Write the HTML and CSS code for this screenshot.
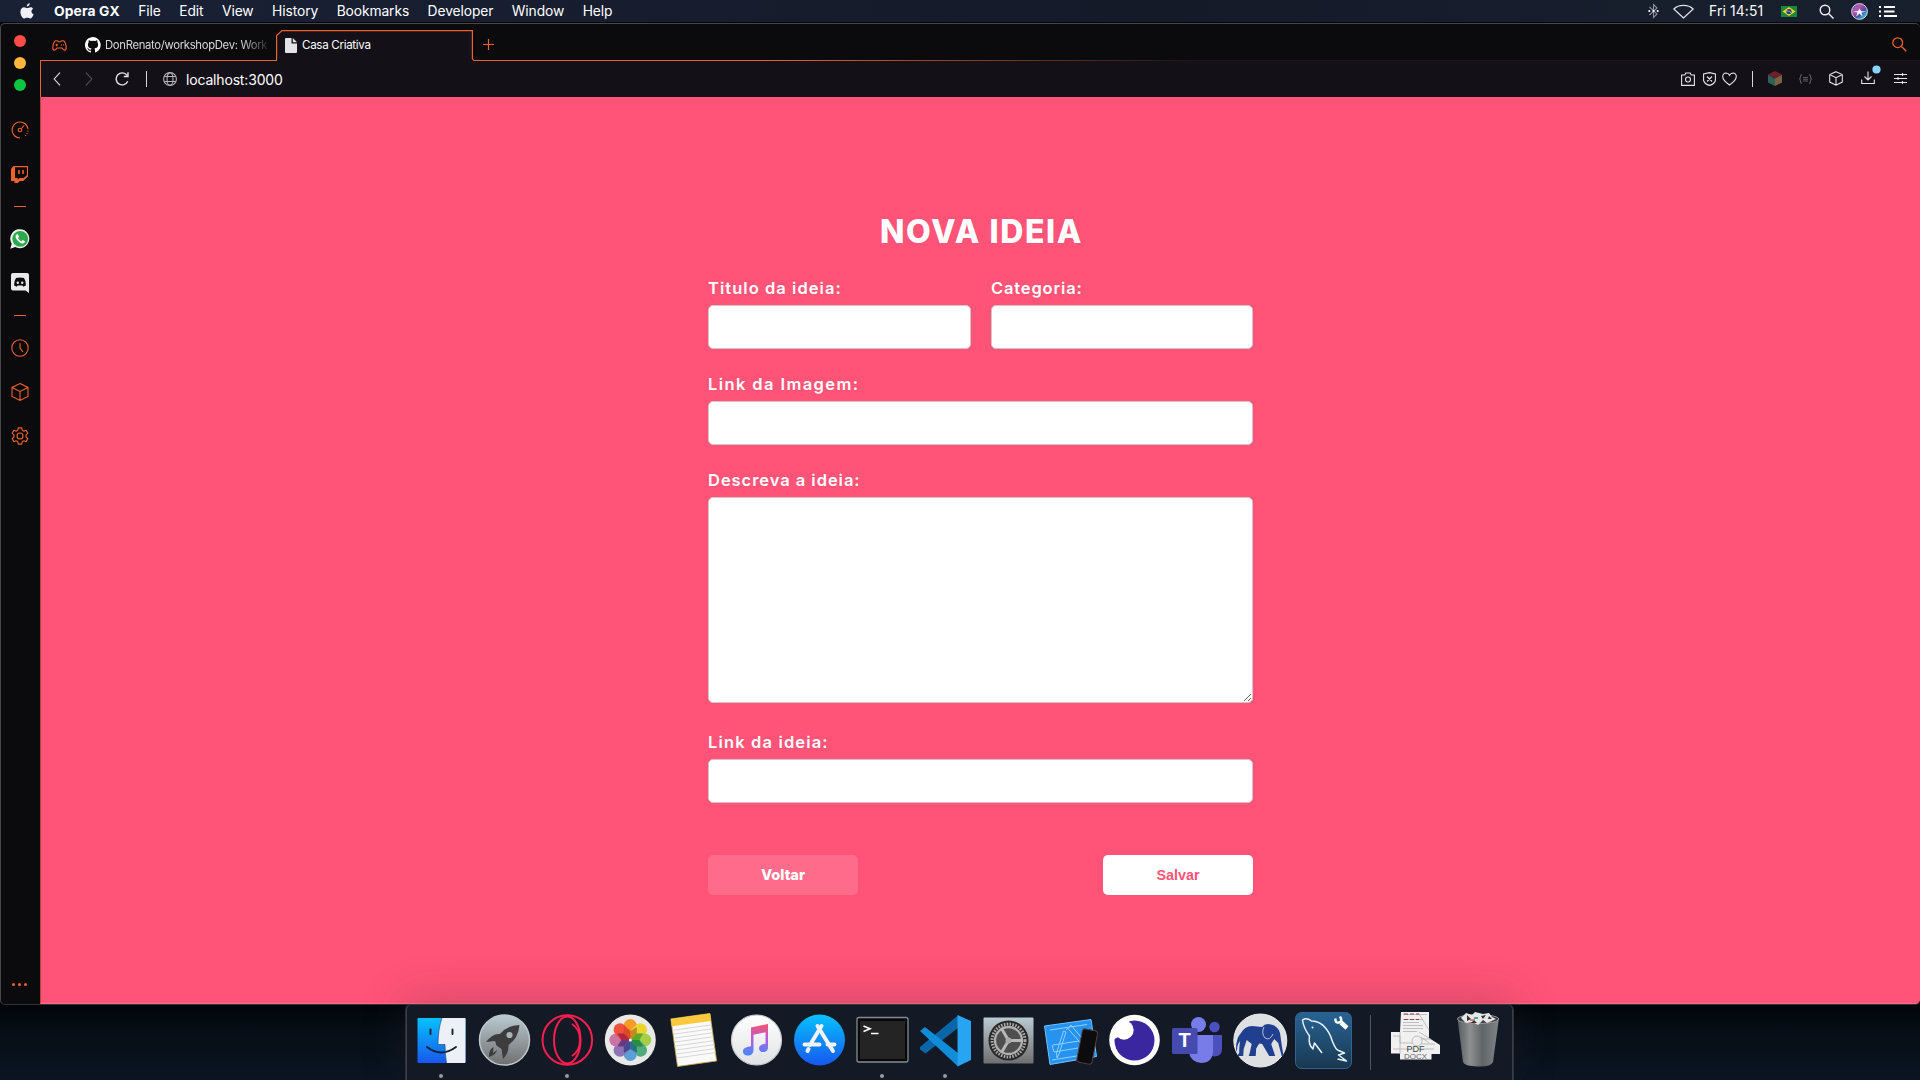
FILE: index.html
```html
<!DOCTYPE html>
<html lang="pt-BR">
<head>
<meta charset="utf-8">
<title>Casa Criativa</title>
<link rel="stylesheet" href="styles.css">
</head>
<body>
<header class="menubar">
  <svg class="apple" width="14" height="17" viewBox="0 0 14 17"><path fill="#eef0f5" d="M9.8 0c.1 1.900-1.300 3.500-3 3.600C6.600 1.900 8.200.2 9.800 0zM13 5.700c-2.300 1.500-1.900 4.500.6 5.500-.8 2.300-2.100 4.300-3.400 4.300-1.100 0-1.500-.7-2.900-.7s-1.800.7-2.900.7C2.500 15.500.4 11.900.4 8.900c0-3 1.900-4.600 3.700-4.600 1.300 0 2.200.8 3.200.8.900 0 2-.9 3.500-.9.9 0 1.700.5 2.200 1.500z"/></svg>
  <nav class="menus">
    <span class="app-name">Opera GX</span><span>File</span><span>Edit</span><span>View</span><span>History</span><span>Bookmarks</span><span>Developer</span><span>Window</span><span>Help</span>
  </nav>
  <div class="status">
    <svg class="bt" width="11" height="16" viewBox="0 0 11 16" fill="none"><path stroke="#8d929c" stroke-width="1.100" d="M1.500 4 9 11l-3.500 3.500v-13L9 5l-7.500 7"/><g fill="#fff"><circle cx="1.300" cy="8" r="1.100"/><circle cx="5.500" cy="8" r="1.100"/><circle cx="9.700" cy="8" r="1.100"/></g></svg>
    <svg class="wifi" width="21" height="15" viewBox="0 0 21 15"><path d="M.8 5C6 .2 15 .2 20.200 5L10.500 14z" fill="none" stroke="#dfe2e8" stroke-width="1.200" stroke-linejoin="round"/></svg>
    <span class="clock">Fri 14:51</span>
    <svg class="flag" width="16" height="11" viewBox="0 0 16 11"><path fill="#16893a" d="M0 0h16v11H0z"/><path fill="#f4d22e" d="m8 1 6.500 4.500L8 10 1.500 5.500z"/><circle cx="8" cy="5.500" r="2.600" fill="#26397c"/><path d="M5.600 4.800q3 0 4.600 2" stroke="#cdd" stroke-width=".7" fill="none"/></svg>
    <svg class="find" width="15" height="15" viewBox="0 0 15 15" fill="none" stroke="#eef0f5" stroke-width="1.400"><circle cx="6" cy="6" r="4.800"/><path d="m9.500 9.500 5 5"/></svg>
    <svg class="siri" width="17" height="17" viewBox="0 0 17 17"><defs><linearGradient id="si" x1="0" y1="0" x2="1" y2="1"><stop stop-color="#3a6fd0"/><stop offset=".35" stop-color="#c052a8"/><stop offset=".6" stop-color="#4a4aa8"/><stop offset=".85" stop-color="#35c8d8"/></linearGradient></defs><circle cx="8.500" cy="8.500" r="7.900" fill="url(#si)" stroke="#dfe3ec" stroke-width=".9"/><path fill="#f3f7ff" d="m8.500 5.500 1.500 2.500 5 .8-4.500.8 1 4-3-3-3.500 3.200 1.500-4.200-4.500-.8L7 8z"/></svg>
    <svg width="18" height="11" viewBox="0 0 18 11" stroke="#fff" stroke-width="1.800"><path d="M0 1h2M5 1h11M0 5.500h2M5 5.500h10.500M0 10h2M5 10h13"/></svg>
  </div>
</header>

<div class="window">
  <aside class="sidebar">
    <div class="lights"><i class="red"></i><i class="yellow"></i><i class="green"></i></div>
    <div class="tools">
      <svg width="18" height="18" viewBox="0 0 18 18"><path d="M9 17A8 8 0 1 1 17 8"/><circle cx="9" cy="9" r="1.800"/><path d="m10.500 7.500 2.500-3"/><path stroke-dasharray="1 1.500" d="M17 9.500Q16.500 13 14 15"/></svg>
      <svg class="g27" width="17" height="17" viewBox="0 0 17 17"><path fill="#f0622d" d="M0 4 3 0v12.500h3V15l2.500-2.500h4.300L16.500 9V0h.5v9.500L12 14.500H8.500L6 17H4v-2.500H0z"/><path fill="#0b0b0d" d="M3.500.6h13v8.900l-3.500 3H9L6.200 15v-2.500H3.500z"/><path stroke-width="1.600" d="M8 4v4m4-4v4"/></svg>
      <i class="dash g23"></i>
      <svg class="brand g22" width="20" height="20" viewBox="0 0 20 20"><path fill="#eee" d="m.3 19.700 1.400-5A9.500 9.500 0 1 1 5.200 18z"/><circle cx="10.200" cy="9.800" r="7.900" fill="#2ba94c"/><path fill="#fff" d="M6.800 5.200C5 6.300 5.300 8.300 6.800 10.500c1.800 2.600 4.200 4.300 6.300 3.900 1.400-.3 2-1.300 1.800-2.200l-2.200-1.100-1.200 1.200c-1.600-.6-2.800-1.900-3.500-3.300l1-1.200-1-2.500z"/></svg>
      <svg class="brand g24" width="18" height="20" viewBox="0 0 18 20"><path fill="#e9e9ea" d="M2 0h14q2 0 2 2v18l-3.500-2.500H2q-2 0-2-2V2q0-2 2-2z"/><path fill="#0b0b0d" d="M5 5q4-1.200 8 0 2 3 2 7.300l-2.600 1.400-1-1.300H6.600l-1 1.300L3 12.300Q3 8 5 5z"/><circle cx="6.800" cy="9.800" r="1.200" fill="#e9e9ea"/><circle cx="11.200" cy="9.800" r="1.200" fill="#e9e9ea"/></svg>
      <i class="dash g22"></i>
      <svg class="g23" width="18" height="18" viewBox="0 0 18 18"><circle cx="9" cy="9" r="8.200"/><path d="M9 4.200V9l3 4"/></svg>
      <svg class="g26" width="18" height="18" viewBox="0 0 18 18"><path d="m9 .6 8 3.800v9L9 17.400l-8-4v-9zM1 4.400l8 4 8-4M9 8.400v9"/></svg>
      <svg class="g26" width="18" height="18" viewBox="0 0 18 18"><path d="M7.300.9h3.400l.5 2.300 1.600.9 2.300-.8 1.700 2.900L15 7.900v2l1.800 1.700-1.700 2.900-2.300-.7-1.600.9-.5 2.400H7.300l-.5-2.400-1.600-.9-2.300.7-1.700-2.900L3 9.900v-2L1.200 6.200l1.700-2.900 2.300.8 1.600-.9z"/><circle cx="9" cy="9" r="3"/></svg>
    </div>
    <div class="more"><i></i><i></i><i></i></div>
  </aside>

  <div class="main">
    <div class="tabstrip">
      <div class="tab-left">
        <svg width="15" height="11" viewBox="0 0 15 11" fill="none" stroke="#f0622d" stroke-width="1.100"><path d="M3.500.7h1.700l1 1h2.600l1-1h1.700q2 1 2.700 6.500.2 2.800-1.500 3Q11.200 10 10 8H5Q3.800 10 2.300 10.200.6 10 .8 7.200 1.500 1.700 3.500.7zM3.500 5H6M4.750 3.750v2.500M9 5h1m1 0h1"/></svg>
        <svg class="gh" width="16" height="16" viewBox="0 0 16 16"><path fill="#fff" d="M8 0C3.580 0 0 3.580 0 8c0 3.540 2.290 6.530 5.470 7.590.4.070.55-.17.55-.38v-1.490c-2.230.48-2.700-1.070-2.700-1.070-.36-.92-.89-1.170-.89-1.170-.73-.5.050-.49.050-.49.800.060 1.230.83 1.230.83.720 1.220 1.870.87 2.330.66.070-.52.280-.87.510-1.070-1.780-.2-3.640-.89-3.640-3.950 0-.87.310-1.590.82-2.150-.08-.2-.36-1.020.08-2.120 0 0 .67-.21 2.200.82a7.600 7.600 0 0 1 4 0c1.530-1.040 2.200-.82 2.200-.82.440 1.100.16 1.920.08 2.120.51.560.82 1.270.82 2.150 0 3.070-1.870 3.750-3.650 3.950.29.250.54.730.54 1.480v2.200c0 .21.150.46.550.38A8 8 0 0 0 8 0z"/></svg>
        <span class="tab-title faded">DonRenato/workshopDev: Work</span>
      </div>
      <div class="tab-active">
        <svg class="tab-shape" width="198" height="32" viewBox="0 0 198 32"><path fill="#131117" stroke="#f0622d" stroke-width="1.200" d="M0 30.500h.6V5.500L6 .6h190.400V29l2 1.500"/><path fill="#131117" d="M1.200 29.500h195v2.500h-195z"/></svg>
        <svg class="doc" width="12" height="15" viewBox="0 0 12 15"><path fill="#e2e4e8" d="M1 0h5.500v5.500H12V14q0 1-1 1H1q-1 0-1-1V1q0-1 1-1zM7.800 0 12 4.300H7.800z"/></svg>
        <span class="tab-title">Casa Criativa</span>
      </div>
      <div class="tab-rest">
        <svg width="11" height="11" viewBox="0 0 11 11" stroke="#f0622d" stroke-width="1.200"><path d="M5.500 0v11M0 5.500h11"/></svg>
        <svg width="15" height="15" viewBox="0 0 15 15" fill="none" stroke="#f0622d" stroke-width="1.300"><circle cx="5.700" cy="5.700" r="4.900"/><path d="m9.300 9.300 5 5"/></svg>
      </div>
    </div>
    <div class="toolbar">
      <svg class="back" width="8" height="14" viewBox="0 0 8 14"><path d="M7 .7 1.200 7 7 13.300"/></svg>
      <svg class="fwd" width="8" height="14" viewBox="0 0 8 14"><path stroke="#55545a" d="M1 .7 6.800 7 1 13.300"/></svg>
      <svg class="reload" width="14" height="14" viewBox="0 0 14 14"><path stroke-width="1.400" d="M12.700 9.200A6 6 0 1 1 12 3.300M13 .3v4.200H8.800"/></svg>
      <i class="sep"></i>
      <svg class="globe" width="14" height="14" viewBox="0 0 14 14"><g stroke="#b4b4b9"><circle cx="7" cy="7" r="6.400"/><ellipse cx="7" cy="7" rx="3" ry="6.400"/><path d="M1.500 4.500h11M1.500 9.500h11"/></g></svg>
      <span class="url">localhost:3000</span>
      <div class="actions">
        <svg class="a1" width="14" height="14" viewBox="0 0 14 14"><path d="M.6 3h3.200l1-2h4.400l1 2h3.200v10.400H.6z"/><circle cx="7" cy="7.500" r="2.500"/></svg>
        <svg class="a2" width="13" height="14" viewBox="0 0 13 14"><path d="M6.500.6 12.400 2v6.500q-1 3.500-5.900 4.900Q1.600 12 .6 8.500V2zM4 4.500l5 5m0-5-5 5"/></svg>
        <svg class="a3" width="15" height="14" viewBox="0 0 15 14"><path d="M7.500 13Q.7 8.500.7 4.600.8 1.200 4 1q2.500.1 3.500 2.300Q8.500 1.100 11 1q3.200.2 3.300 3.600 0 3.900-6.800 8.400z"/></svg>
        <i class="sep"></i>
        <svg class="brand a4" width="14" height="15" viewBox="0 0 14 15"><path fill="#701f2d" d="m7 0 7 3.500L7 7.300 0 3.500z"/><path fill="#2b6257" d="M0 3.700 7 7.500V15l-7-3.500z"/><path fill="#7a6240" d="M14 3.700 7 7.500V15l7-3.500z"/></svg>
        <svg class="a5" width="13" height="10" viewBox="0 0 13 10"><path stroke="#5c5c62" d="M3 .6q-1.500 0-1.500 2T.3 5q1.200.2 1.200 2.300T3 9.400M10 .6q1.500 0 1.500 2T12.700 5q-1.200.2-1.200 2.300T10 9.400M4 3.500h5M4 5.200h5M4 7h5"/></svg>
        <svg class="a6" width="14" height="15" viewBox="0 0 14 15"><path d="m7 .7 6.300 2.900v7.500L7 14.200.7 11.100V3.600zM.7 3.600 7 6.700l6.300-3.100M7 6.700v7.500"/></svg>
        <svg class="a7" width="20" height="20" viewBox="0 0 20 20"><path d="M.7 14.500v4h12.600v-4M7 6.500V15M3.500 11.500 7 15l3.500-3.500"/><circle cx="15.500" cy="4.500" r="4.100" fill="#86d4ff" stroke="none"/></svg>
        <svg class="a8" width="13" height="11" viewBox="0 0 13 11"><path d="M0 1.500h13M0 5.500h13M0 9.500h13M8.500 0v3M4 4v3M8.500 8v3"/></svg>
      </div>
    </div>
    <main class="page">
      <form class="idea-form">
        <h1>NOVA IDEIA</h1>
        <div class="pair">
          <div class="field"><label class="titulo" for="t">Titulo da ideia:</label><input id="t"></div>
          <div class="field"><label class="categoria" for="c">Categoria:</label><input id="c"></div>
        </div>
        <div class="field"><label class="imagem" for="i">Link da Imagem:</label><input id="i"></div>
        <div class="field"><label class="descricao" for="d">Descreva a ideia:</label><textarea id="d"></textarea></div>
        <div class="field"><label class="link" for="l">Link da ideia:</label><input id="l"></div>
        <div class="buttons"><button type="button" class="ghost">Voltar</button><button type="button" class="solid">Salvar</button></div>
      </form>
    </main>
  </div>
</div>

<footer class="dock">
  <svg width="1107" height="75" viewBox="406 1005 1107 75">
    <defs>
      <linearGradient id="blue" x2="0" y2="1"><stop stop-color="#07c1fc"/><stop offset="1" stop-color="#1758f0"/></linearGradient>
      <linearGradient id="silver" x2="0" y2="1"><stop stop-color="#b9cbd2"/><stop offset="1" stop-color="#706f70"/></linearGradient>
      <linearGradient id="white" x2="0" y2="1"><stop stop-color="#fff"/><stop offset="1" stop-color="#e1e2e6"/></linearGradient>
      <linearGradient id="note" x2="0" y2="1"><stop stop-color="#f5546b"/><stop offset=".5" stop-color="#b45ee0"/><stop offset="1" stop-color="#3f8bff"/></linearGradient>
      <linearGradient id="sql" x2="0" y2="1"><stop stop-color="#286395"/><stop offset="1" stop-color="#193850"/></linearGradient>
      <linearGradient id="can"><stop stop-color="#565b5e"/><stop offset=".3" stop-color="#8c9091"/><stop offset=".6" stop-color="#606567"/><stop offset="1" stop-color="#808587"/></linearGradient>
    </defs>
    <!-- Finder -->
    <rect x="417.500" y="1018" width="48" height="45" rx="1" fill="url(#blue)"/>
    <path fill="#edf1f7" d="M442 1018h22.500q1 0 1 1v43q0 1-1 1H446.500q-1.500-9-1.500-18.500h-7Q438 1029 442 1018z"/>
    <path d="M430.500 1029.500v4.500M452.500 1029.500v4.500M427 1047q14 11 29 0" fill="none" stroke="#14202e" stroke-width="1.900" stroke-linecap="round"/>
    <path d="M442 1018Q438 1029 438 1044.500h7q0 9.500 1.500 18.500" fill="none" stroke="#1b5687" stroke-width=".7"/>
    <!-- Launchpad -->
    <circle cx="504.500" cy="1040" r="25" fill="url(#silver)" stroke="#bfc7cb" stroke-width="1.500"/>
    <path fill="#3d3d3f" d="M519.500 1025q-12 0-19.500 9-7-1-14 8l9-1 1.500 4.500 5 3.500 1.500 10q6-6 5.500-14 10-7 11-20zM493.500 1047q-5 3-4.500 10 7-2 8-7l-4 3z"/><circle cx="509.500" cy="1035" r="3.100" fill="#a9b2b5"/>
    <!-- Opera GX -->
    <g fill="none" stroke="#f91e4e"><circle cx="567.300" cy="1040" r="24.800" stroke-width="2"/><ellipse cx="567.300" cy="1040" rx="13.300" ry="23.500" stroke-width="2"/><path stroke-width="2" d="M572 1024q8 5 8 16t-8 16"/></g>
    <!-- Photos -->
    <circle cx="630.300" cy="1040" r="25.500" fill="#e9e9e8"/>
    <g transform="translate(630.300 1040)">
      <rect x="-6.500" y="-21" width="13" height="21" rx="6.500" fill="#f99c25"/>
      <rect x="-6.500" y="-21" width="13" height="21" rx="6.500" fill="#ead42f" transform="rotate(45)"/>
      <rect x="-6.500" y="-21" width="13" height="21" rx="6.500" fill="#a6cf48" transform="rotate(90)"/>
      <rect x="-6.500" y="-21" width="13" height="21" rx="6.500" fill="#51ab7d" transform="rotate(135)"/>
      <rect x="-6.500" y="-21" width="13" height="21" rx="6.500" fill="#5b9fd6" transform="rotate(180)"/>
      <rect x="-6.500" y="-21" width="13" height="21" rx="6.500" fill="#8a74b7" transform="rotate(225)"/>
      <rect x="-6.500" y="-21" width="13" height="21" rx="6.500" fill="#c974a4" transform="rotate(270)"/>
      <rect x="-6.500" y="-21" width="13" height="21" rx="6.500" fill="#f0503c" transform="rotate(315)"/>
      <path fill="#d94a25" d="M0 0-6.500-6.500V-13L0-9z"/><path fill="#c58a20" d="M0 0v-9l6.500-4v6.500z"/><path fill="#5fa827" d="m0 0 6.500-6.500H13L9 0z"/><path fill="#2b8d3e" d="M0 0h9l4 6.500H6.500z"/><path fill="#27737d" d="m0 0 6.500 6.500V13L0 9z"/><path fill="#434a91" d="M0 0v9l-6.500 4V6.500z"/><path fill="#6d377e" d="m0 0-6.500 6.500H-13L-9 0z"/><path fill="#b32543" d="M0 0h-9l-4-6.500h6.500z"/><circle r="1.500" fill="#fff"/>
    </g>
    <!-- Notes -->
    <g transform="rotate(-8 693.500 1040)"><rect x="674" y="1016" width="39.500" height="48" fill="#fafafa" stroke="#c5a349" stroke-width=".8"/><path fill="#fdc93c" d="M674 1016h39.500v7.500H674z"/><path stroke="#d0d0d0" stroke-width=".8" d="M674 1027.500h39.500m-39.500 4h39.500m-39.500 4h39.500m-39.500 4h39.500m-39.500 4h39.500m-39.500 4h39.500m-39.500 4h39.500m-39.500 4h39.500"/></g>
    <!-- Music -->
    <circle cx="756.500" cy="1040" r="25" fill="url(#white)" stroke="#c9cacd" stroke-width="1.200"/>
    <path fill="url(#note)" d="M751 1027.500 768 1024v23.500c0 6-9 6-9 .7 0-3 3-4 6.500-4.500v-11.500l-12 2.500v15.500c0 7-10.500 7-10.500 1 0-3.500 4-4.500 8-5z"/>
    <!-- App Store -->
    <circle cx="819.500" cy="1040" r="25.500" fill="url(#blue)"/><g stroke="#f1f3f8" stroke-width="4" stroke-linecap="round"><path d="m821.500 1026-11.500 19M817.500 1026l15.500 25M804.500 1044.500h15M827.500 1044.500h7M808.500 1049l-1 2"/></g>
    <!-- Terminal -->
    <rect x="857" y="1017.500" width="51" height="44.500" rx="2" fill="#080808" stroke="#858c91" stroke-width="1.300"/><rect x="860" y="1021" width="45" height="38" fill="#242424"/>
    <path fill="none" stroke="#fff" stroke-width="1.600" d="m863.500 1026 6.500 2.700-6.500 2.700M871 1033.500h7.500"/>
    <!-- VS Code -->
    <path fill="#0b66a7" d="m920 1049.500 5.500 4 33-26V1015l-38.500 32z"/><path fill="#118cd9" d="m920 1031 5-4 33 26v13.500z"/><path fill="#27a4f2" d="m957.500 1015 13.500 6v39l-13.500 6.500z"/>
    <!-- System Preferences -->
    <rect x="983.500" y="1017.500" width="50" height="46" rx="1" fill="url(#silver)"/><circle cx="1008.500" cy="1040.500" r="20" fill="#282828"/><circle cx="1008.500" cy="1040.500" r="16.500" fill="none" stroke="#aaa" stroke-width="3" stroke-dasharray="1.600 1.300"/><circle cx="1008.500" cy="1040.500" r="13.500" fill="#4e4e4e" stroke="#b0b0b0" stroke-width="2.300"/><path d="M1008.500 1040.500h13.500m-13.500 0-7-12m7 12-7 12" stroke="#b7b7b7" stroke-width="3"/><circle cx="1008.500" cy="1040.500" r="3" fill="#aaa"/>
    <!-- Simulator -->
    <path fill="#2693f0" stroke="#71c3ff" d="m1044.500 1026 46.500-6.500 5.500 37-46.500 8z"/><g fill="none" stroke="#90d0ff" stroke-width="1"><path d="m1052 1060 40-6.500M1050 1030l37-5.500M1053 1045l26-4M1067 1027.500l15 17M1066 1030l5-5 13 16M1066 1032l-7 22-2 4-.500-5 7-22zM1052 1045l2 7 24-4"/></g>
    <rect x="1079.500" y="1029.500" width="15.500" height="34" rx="3" transform="rotate(11 1087 1046)" fill="#0c0c0e" stroke="#514444"/>
    <!-- Insomnia -->
    <circle cx="1134.500" cy="1040" r="25.300" fill="#fff"/><circle cx="1134.500" cy="1040.500" r="20" fill="#3a269e"/><circle cx="1124" cy="1030" r="9.700" fill="#fff"/><path fill="#fff" d="m1113 1040 5-16 12-5-5 14z"/>
    <!-- Teams -->
    <circle cx="1214.500" cy="1027" r="5.200" fill="#4c4fc0"/><circle cx="1198.500" cy="1024.500" r="7.500" fill="#777ce8"/><path fill="#4b50bd" d="M1208 1035h14v14q0 7-7 7.500-4 0-7-3z"/><path fill="#777ce8" d="M1189 1035h24v17q-1 11-12 11-10-1-12-10z"/><rect x="1172" y="1028" width="25.500" height="26" rx="1.500" fill="#454aaf"/><text x="1184.500" y="1047" class="teams-t" text-anchor="middle">T</text>
    <!-- Elephant -->
    <circle cx="1260.300" cy="1040.500" r="26.500" fill="#dfe0e2" stroke="#f0f0f0"/><path fill="#213f8f" d="M1241 1033q4-7 11-7l10 1q3-4 9-2.500 7 1.500 9 8.500l2 14 1.500 9h-1.800l-3.500-13-4-4-3 5 4 12h-6l-7-12-3-.5-3 5-.5 7.500h-7l1-3 2-9-5-4-3 9-.5 7h-6q1-2 2-3 0-8 1-12-3 3-3 8l-1 3q-1-13 4.800-19z"/><path fill="none" stroke="#dfe0e2" stroke-width=".8" d="M1264 1027q-3 6 1 11 5 3 8-4"/>
    <!-- MySQL Workbench -->
    <rect x="1295.500" y="1012.500" width="56" height="56" rx="6" fill="url(#sql)" stroke="#2f6490"/><path fill="none" stroke="#e8f2f8" stroke-width="1.500" stroke-linejoin="round" d="m1322 1053-7.500-10q-1 3-1.500 6-5-4-3.500-13-6-8-7-16 4-3 9 1 12 0 19 15 4 12 7 14l7 3-6 2 8 6-9-2"/><circle cx="1312.500" cy="1027.500" r="1" fill="#fff"/><path d="m1341 1022.500 6 5.500" stroke="#fff" stroke-width="4.500"/><path d="M1340 1016.500q3 5-1 6t-3.500-4" fill="none" stroke="#fff" stroke-width="2.400"/>
    <path d="M1370.500 1015v55" stroke="#50565d"/>
    <!-- Documents stack -->
    <path fill="#f0f0f0" d="M1401 1012h28v26l11 7v9h-8.500v5.500h-31.500v-6h-9v-21.500h9z"/><g stroke="#aaa" stroke-width=".7" fill="none"><path d="M1403 1014.500h24m-24 5h20m-20 3h16m-16 3h20m-20 3h20m-20 3h14M1393 1036h7v7h14m-21 6h20m8-12 8 6m-13-4h15m-13 5h17m-17 5h16M1419 1014l10 16M1400 1032v22M1429 1038l-10-6"/><circle cx="1417" cy="1041" r="5" fill="#eee"/></g><path stroke="#8f3f46" stroke-width="1.200" stroke-dasharray="4 2" d="M1404 1014h15M1404 1019.500h15"/>
    <text x="1415.500" y="1059" class="doc-s" text-anchor="middle">DOCX</text><text x="1415.500" y="1051.500" class="doc-t" text-anchor="middle">PDF</text>
    <!-- Trash -->
    <path fill="url(#can)" d="M1457.500 1018 1463 1062q1 4 14.500 4.500T1493 1062l6-44z"/><ellipse cx="1478" cy="1019" rx="20.500" ry="4.500" fill="#35383b" stroke="#9a9d9e"/><path fill="#e7e7e7" d="m1461 1018 5-5 6 2 3-3 8 2 6-1 3 4 4 2-9 4-4-3-5 5-5-3-7 1z"/><path fill="#303335" d="m1467 1015 4 4-4 2zM1481 1016l5-1-3 4zM1474 1020l3 3-6 0zM1489 1016l3 3-4 0z"/><path stroke="#d8603e" stroke-width="1.500" d="m1470 1020 5 0"/><path stroke="#39b3ae" stroke-width="2" d="m1474 1018 4 0"/>
    <!-- Running indicators -->
    <g fill="#999da3"><circle cx="441" cy="1076" r="2"/><circle cx="567" cy="1076" r="2"/><circle cx="882" cy="1076" r="2"/><circle cx="945" cy="1076" r="2"/></g>
  </svg>
</footer>
</body>
</html>
```

FILE: styles.css
```css
* { box-sizing: border-box; }
body {
  margin: 0;
  width: 1920px;
  height: 1080px;
  overflow: hidden;
  display: flex;
  flex-direction: column;
  background: linear-gradient(#02050a 1004px, #060d16 1030px, #091521 1080px);
  font-family: Inter, "Liberation Sans", sans-serif;
  color: #fff;
}
svg { display: block; flex: none; }

.menubar {
  height: 23px;
  flex: none;
  display: flex;
  align-items: center;
  padding: 0 23px 0 20px;
  background: linear-gradient(90deg, #192135, #151a29 60%, #18202e);
  border-bottom: 1px solid #04060a;
}
.menus { display: flex; gap: 18.500px; margin-left: 20px; font-size: 13.800px; line-height: 22px; letter-spacing: -.09px; white-space: nowrap; }
.app-name { font-weight: 700; letter-spacing: .14px; }
.status { margin-left: auto; display: flex; align-items: center; }
.wifi { margin-left: 14px; }
.clock { margin-left: 15px; width: 55px; font-size: 13.800px; letter-spacing: .15px; white-space: nowrap; }
.flag { margin-left: 17px; }
.find { margin-left: 22px; }
.siri { margin: 0 11px 0 17px; }

.window {
  height: 982px;
  flex: none;
  display: flex;
  background: #0b0b0d;
  border: 1px solid #46474a;
  border-right: 0;
  border-bottom-color: #333;
  border-radius: 5px;
  overflow: hidden;
}
.sidebar { width: 39px; flex: none; display: flex; flex-direction: column; align-items: center; padding-right: 2px; }
.lights { display: flex; flex-direction: column; gap: 10px; padding-top: 11px; }
.lights i { width: 12px; height: 12px; border-radius: 50%; }
.red { background: #fc4c4a; }
.yellow { background: #fdb63c; }
.green { background: #0cc643; }
.tools { display: flex; flex-direction: column; align-items: center; padding-top: 30px; }
.tools svg { fill: none; stroke: #f0622d; stroke-width: 1.100; }
.tools .brand, .toolbar .brand { stroke: none; }
.dash { width: 12px; height: 1px; background: #f0622d; }
.g22 { margin-top: 22px; }
.g23 { margin-top: 23px; }
.g24 { margin-top: 24px; }
.g26 { margin-top: 26px; }
.g27 { margin-top: 27px; }
.more { margin-top: auto; padding-bottom: 18px; display: flex; gap: 3px; }
.more i { width: 3px; height: 3px; border-radius: 50%; background: #f0622d; }

.main { flex: 1; display: flex; flex-direction: column; min-width: 0; }
.tabstrip { height: 37px; flex: none; display: flex; align-items: flex-end; }
.tab-left, .tab-rest { height: 37px; border-bottom: 1px solid #f0622d; display: flex; align-items: center; padding-top: 6px; }
.tab-left { width: 236px; padding-left: 12px; }
.gh { margin-left: 18px; }
.tab-title { margin-left: 5px; font-size: 11.600px; white-space: nowrap; letter-spacing: -.1px; }
.tab-title.faded { margin-left: 4px; letter-spacing: -.32px; font-size: 11.300px; color: #d8d8da; -webkit-mask-image: linear-gradient(90deg, #000 84%, rgba(0, 0, 0, .15)); mask-image: linear-gradient(90deg, #000 84%, rgba(0, 0, 0, .15)); }
.tab-active { width: 198px; height: 31px; display: grid; grid-template-columns: auto 1fr; align-items: center; padding: 0 0 1px 9px; position: relative; }
.tab-active .tab-title { letter-spacing: -.32px; }
.tab-shape { position: absolute; left: 0; top: 0; }
.doc, .tab-active .tab-title { position: relative; }
.tab-rest { flex: 1; justify-content: space-between; padding: 5px 13px 0 9px; border-image: linear-gradient(90deg, #f0622d 20%, #17161b 50%) 1; }
.toolbar { height: 36px; flex: none; display: flex; align-items: center; background: #131117; border-left: 1px solid #f0622d; padding: 0 13px 1px 12px; }
.toolbar svg { fill: none; stroke: #e3e4e8; stroke-width: 1.100; }
.fwd { margin-left: 24px; }
.reload { margin-left: 22px; }
.sep { width: 1px; height: 16px; background: #d8d8dc; }
.reload + .sep { margin-left: 17px; }
.globe { margin-left: 16px; }
.url { margin-left: 9px; font-size: 14px; letter-spacing: -.17px; padding-top: 2px; white-space: nowrap; }
.actions { margin-left: auto; display: flex; align-items: center; }
.a1 { margin-right: 1px; }
.a2 { margin-left: 7px; }
.a3 { margin-left: 6px; margin-right: 15px; }
.a4 { margin-left: 15px; }
.a5 { margin-left: 17px; }
.a6 { margin-left: 17px; }
.a7 { margin: -7px 0 0 18px; }
.a8 { margin-left: 13px; }

.page { flex: 1; border-left: 1px solid #b04a3c; background: #ff5377; display: flex; justify-content: center; border-bottom: 1px solid #fb6c8a; }
.idea-form { width: 545px; padding-top: 113px; }
h1 { margin: 0; height: 43px; line-height: 44px; font-size: 32px; font-weight: 800; text-align: center; letter-spacing: 1.600px; padding-left: 2px; white-space: nowrap; }
.pair { display: grid; grid-template-columns: 263px 262px; gap: 20px; }
.field { display: flex; flex-direction: column; }
label { height: 52px; padding-top: 23px; font-size: 16.500px; line-height: 24px; font-weight: 600; white-space: nowrap; }
.titulo { letter-spacing: 1.050px; }
.categoria { letter-spacing: .85px; }
.imagem { letter-spacing: 1.400px; }
.descricao { letter-spacing: .96px; }
.link { letter-spacing: 1.150px; }
input, textarea { height: 44px; width: 100%; border: 1px solid #d6c3c8; border-radius: 5px; background: #fff; padding: 8px; outline: none; }
textarea { height: 206px; margin-bottom: 4px; resize: both; }
.buttons { margin-top: 52px; display: flex; justify-content: space-between; }
button { width: 150px; height: 40px; border: 0; border-radius: 5px; font: 800 14.600px Inter, sans-serif; padding-bottom: 2px; }
.ghost { background: #ff6b8a; color: #fff; }
.solid { background: #fff; color: #ff5377; font: 700 14.400px "Liberation Sans", sans-serif; padding-bottom: 1px; }

.dock { position: absolute; left: 406px; top: 1005px; width: 1107px; height: 75px; background: #131925; border-left: 1px solid #3a404a; border-right: 1px solid #3a404a; border-radius: 5px 5px 0 0; box-shadow: 0 0 0 1px rgba(70, 55, 68, .7), 0 -4px 44px rgba(60, 50, 60, .25); }
.dock > svg { margin-left: -1px; }
.teams-t { font: 700 20px "Liberation Sans", sans-serif; fill: #fff; }
.doc-t { font: 9px "Liberation Sans", sans-serif; fill: #444; }
.doc-s { font: 8px "Liberation Sans", sans-serif; fill: #666; }
```
